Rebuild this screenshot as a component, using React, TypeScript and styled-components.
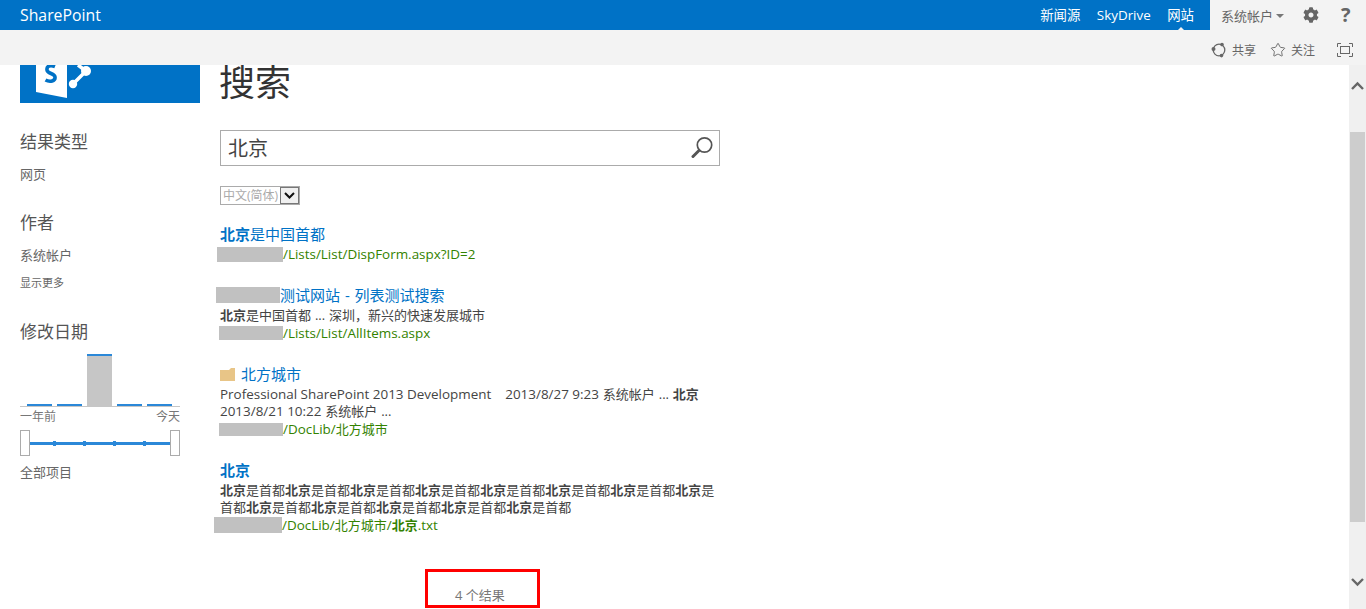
import React from "react";
import styled, { createGlobalStyle } from "styled-components";
import { FaCog } from "react-icons/fa";
import { Star } from "lucide-react";

const FONT = `"Open Sans", "Noto Sans CJK SC", sans-serif`;

const Global = createGlobalStyle`
  html, body { margin: 0; padding: 0; height: 100%; overflow: hidden; background: #fff; }
  body { font-family: ${FONT}; color: #444; }
  * { box-sizing: border-box; }
`;

const Page = styled.div`
  display: flex;
  flex-direction: column;
  height: 609px;
  width: 1366px;
  overflow: hidden;
`;

const TopBar = styled.header`
  display: flex;
  align-items: stretch;
  height: 30px;
  flex: none;
  background: #0072c6;
  color: #fff;
`;

const Brand = styled.div`
  flex: 1;
  padding-left: 20px;
  font-size: 15.8px;
  line-height: 30px;
`;

const NavList = styled.nav`
  display: flex;
  gap: 16.5px;
  padding-right: 16px;
  font-size: 13.4px;
  line-height: 30px;
`;

const NavItem = styled.span<{ $active?: boolean }>`
  position: relative;
  ${(p) =>
    p.$active &&
    `&::after {
      content: "";
      position: absolute;
      left: 50%;
      bottom: 0;
      margin-left: -3px;
      border: 3px solid transparent;
      border-top: 0;
      border-bottom-color: #f3f3f3;
    }`}
`;

const UserArea = styled.div`
  display: flex;
  align-items: center;
  width: 156px;
  padding-left: 11px;
  background: #f3f3f3;
  color: #666;
  font-size: 13px;
`;

const Caret = styled.span`
  width: 0;
  height: 0;
  margin-left: 3px;
  margin-top: 1px;
  border: 4px solid transparent;
  border-bottom: 0;
  border-top-color: #777;
`;

const GearWrap = styled.span`
  display: flex;
  margin-left: 19px;
  color: #666;
`;

const Help = styled.span`
  margin-left: 22px;
  font-size: 20px;
  font-weight: 700;
  line-height: 30px;
  color: #666;
`;

const Ribbon = styled.div`
  display: flex;
  align-items: center;
  justify-content: flex-end;
  height: 35px;
  flex: none;
  padding-top: 4px;
  padding-right: 13px;
  background: #f3f3f3;
  color: #666;
  font-size: 12px;
`;

const RibbonAction = styled.span`
  display: flex;
  align-items: center;
  gap: 5px;
  margin-right: 14px;
`;

const FocusIcon = styled.svg`
  margin-left: 8px;
  display: block;
`;

const Body = styled.div`
  flex: 1;
  min-height: 0;
  display: flex;
  overflow: hidden;
`;

const Content = styled.main`
  flex: 1;
  display: flex;
  min-width: 0;
  overflow: hidden;
`;

const Side = styled.aside`
  width: 220px;
  flex: none;
  padding-left: 20px;
`;

const Logo = styled.div`
  width: 180px;
  height: 38px;
  background: #0072c6;
`;

const RefinerTitle = styled.h3<{ $top: number }>`
  margin: ${(p) => p.$top}px 0 0;
  font-size: 17px;
  font-weight: 400;
  line-height: 24px;
  color: #555;
`;

const RefinerItem = styled.div`
  margin-top: 11px;
  font-size: 13px;
  line-height: 18px;
  color: #666;
`;

const MoreLink = styled.div`
  margin-top: 11px;
  font-size: 11px;
  line-height: 16px;
  color: #666;
`;

const Chart = styled.div`
  display: flex;
  align-items: flex-end;
  gap: 5px;
  width: 160px;
  height: 53px;
  margin-top: 10px;
  padding: 0 8px 0 7px;
  border-bottom: 1px solid #c6c6c6;
`;

const Bar = styled.div<{ $h: number }>`
  width: 25px;
  height: ${(p) => p.$h}px;
  background: #c6c6c6;
  border-top: 2px solid #2b88d8;
`;

const AxisLabels = styled.div`
  display: flex;
  justify-content: space-between;
  width: 160px;
  margin-top: 2px;
  font-size: 12px;
  line-height: 16px;
  color: #777;
`;

const Slider = styled.div`
  display: flex;
  align-items: center;
  width: 160px;
  height: 26px;
  margin-top: 5px;
`;

const Handle = styled.div`
  width: 10px;
  height: 26px;
  flex: none;
  background: #fff;
  border: 1px solid #ababab;
`;

const Track = styled.div`
  flex: 1;
  display: flex;
  align-items: center;
  gap: 27px;
  height: 3px;
  padding-left: 23px;
  background: #2b88d8;
`;

const Tick = styled.span`
  width: 3px;
  height: 5px;
  flex: none;
  background: #2b88d8;
`;

const AllItems = styled.div`
  margin-top: 7px;
  font-size: 13px;
  line-height: 18px;
  color: #666;
`;

const Main = styled.section`
  width: 520px;
  flex: none;
`;

const PageTitle = styled.h1`
  margin: -6px 0 0 -1px;
  font-size: 36px;
  font-weight: 400;
  line-height: 48px;
  color: #333;
`;

const SearchBox = styled.div`
  display: flex;
  align-items: center;
  justify-content: space-between;
  width: 500px;
  height: 36px;
  margin-top: 23px;
  padding: 0 5px 2px 7px;
  border: 1px solid #ababab;
  font-size: 20px;
  color: #444;
`;

const Language = styled.div`
  display: flex;
  width: 80px;
  height: 19px;
  margin-top: 20px;
  border: 1px solid #ababab;
  font-size: 12px;
  line-height: 17px;
  color: #aaa;
`;

const LanguageText = styled.span`
  width: 60px;
  padding-left: 2px;
  white-space: nowrap;
`;

const LanguageArrow = styled.span`
  display: flex;
  align-items: center;
  justify-content: center;
  width: 19px;
  background: #f0f0f0;
  border: 1px solid #777;
`;

const Results = styled.div`
  display: flex;
  flex-direction: column;
  gap: 22px;
  margin-top: 19px;
  width: 500px;
`;

const Result = styled.article``;

const ResultTitle = styled.div`
  display: flex;
  align-items: center;
  font-size: 15px;
  line-height: 20px;
  color: #0072c6;
  white-space: pre;
  word-spacing: 1px;
`;

const Desc = styled.div`
  margin-top: 2px;
  font-size: 13px;
  line-height: 17px;
  color: #444;
  word-spacing: 0.5px;
`;

const Url = styled.div`
  display: flex;
  align-items: center;
  margin-top: 1px;
  font-size: 13px;
  line-height: 18px;
  color: #338200;
  white-space: nowrap;

  ${Desc} + & {
    margin-top: 0;
  }
`;

const Latin = styled.span`
  font-size: 13.45px;
  word-spacing: 0;
`;

const Redacted = styled.span<{ $left: number; $width: number; $height: number }>`
  display: inline-block;
  flex: none;
  margin-left: ${(p) => p.$left}px;
  width: ${(p) => p.$width}px;
  height: ${(p) => p.$height}px;
  background: #c1c1c1;
`;

const FolderIcon = styled.svg`
  display: block;
  margin-right: 6px;
`;

const CountBox = styled.div`
  width: 115px;
  height: 39px;
  margin: 35px 0 0 205px;
  padding: 14px 0 0 27px;
  border: 3px solid #f00;
  font-size: 13px;
  line-height: 18px;
  color: #777;
  white-space: nowrap;
`;

const Scrollbar = styled.div`
  display: flex;
  flex-direction: column;
  align-items: center;
  width: 17px;
  flex: none;
  background: #f0f0f0;
`;

const ScrollButton = styled.svg`
  display: block;
  flex: none;
`;

const Thumb = styled.div<{ $h: number; $top: number }>`
  width: 15px;
  height: ${(p) => p.$h}px;
  margin-top: ${(p) => p.$top}px;
  background: #cdcdcd;
  flex: none;
`;

const LogoArt = () => (
  <svg width="180" height="38" viewBox="0 0 180 38" style={{ display: "block" }}>
    <path d="M16 0H47V33L16 27Z" fill="#fff" />
    <path d="M35 1.5C30 -0.5 26.5 1 27 5C27.5 9 34.5 8 35 12C35.5 16 30 17.5 25.5 15" fill="none" stroke="#0072c6" strokeWidth="3.6" />
    <path d="M53 19L66 6M58 0L66 6" stroke="#fff" strokeWidth="3.5" fill="none" />
    <circle cx="53" cy="19" r="4.2" fill="#fff" />
    <circle cx="66" cy="6" r="5" fill="#fff" />
  </svg>
);

const ShareIcon = () => (
  <svg width="16" height="16" viewBox="0 0 16 16">
    <circle cx="8" cy="8" r="5.8" fill="none" stroke="#666" strokeWidth="1.3" />
    <circle cx="2.5" cy="7" r="2" fill="#666" />
    <circle cx="11" cy="2.6" r="1.8" fill="#666" />
    <circle cx="10.5" cy="13.6" r="1.8" fill="#666" />
  </svg>
);

const MagnifierIcon = () => (
  <svg width="23" height="23" viewBox="0 0 23 23">
    <circle cx="13.5" cy="9" r="7.2" fill="none" stroke="#555" strokeWidth="1.7" />
    <path d="M8 14.5L2 20.5" stroke="#555" strokeWidth="3" strokeLinecap="round" />
  </svg>
);

export default function App() {
  return (
    <Page>
      <Global />
      <TopBar>
        <Brand>SharePoint</Brand>
        <NavList>
          <NavItem>新闻源</NavItem>
          <NavItem>SkyDrive</NavItem>
          <NavItem $active>网站</NavItem>
        </NavList>
        <UserArea>
          系统帐户
          <Caret />
          <GearWrap>
            <FaCog size={16} />
          </GearWrap>
          <Help>?</Help>
        </UserArea>
      </TopBar>
      <Ribbon>
        <RibbonAction>
          <ShareIcon />
          共享
        </RibbonAction>
        <RibbonAction>
          <Star size={16} strokeWidth={1.4} color="#666" />
          关注
        </RibbonAction>
        <FocusIcon width="16" height="14" viewBox="0 0 16 14">
          <path d="M.5 4V.5H4M12 .5H15.5V4M15.5 10V13.5H12M4 13.5H.5V10" fill="none" stroke="#666" />
          <rect x="3.5" y="3.5" width="9" height="7" fill="none" stroke="#666" />
        </FocusIcon>
      </Ribbon>
      <Body>
        <Content>
          <Side>
            <Logo>
              <LogoArt />
            </Logo>
            <RefinerTitle $top={27}>结果类型</RefinerTitle>
            <RefinerItem>网页</RefinerItem>
            <RefinerTitle $top={28}>作者</RefinerTitle>
            <RefinerItem>系统帐户</RefinerItem>
            <MoreLink>显示更多</MoreLink>
            <RefinerTitle $top={29}>修改日期</RefinerTitle>
            <Chart>
              <Bar $h={2} />
              <Bar $h={2} />
              <Bar $h={52} />
              <Bar $h={2} />
              <Bar $h={2} />
            </Chart>
            <AxisLabels>
              <span>一年前</span>
              <span>今天</span>
            </AxisLabels>
            <Slider>
              <Handle />
              <Track>
                <Tick />
                <Tick />
                <Tick />
                <Tick />
              </Track>
              <Handle />
            </Slider>
            <AllItems>全部项目</AllItems>
          </Side>
          <Main>
            <PageTitle>搜索</PageTitle>
            <SearchBox>
              北京
              <MagnifierIcon />
            </SearchBox>
            <Language>
              <LanguageText>中文(简体)</LanguageText>
              <LanguageArrow>
                <svg width="11" height="7" viewBox="0 0 11 7">
                  <path d="M1 1L5.5 5.5L10 1" fill="none" stroke="#111" strokeWidth="2" />
                </svg>
              </LanguageArrow>
            </Language>
            <Results>
              <Result>
                <ResultTitle>
                  <span>
                    <b>北京</b>是中国首都
                  </span>
                </ResultTitle>
                <Url>
                  <Redacted $left={-3} $width={66} $height={15} />
                  <Latin>/Lists/List/DispForm.aspx?ID=2</Latin>
                </Url>
              </Result>
              <Result>
                <ResultTitle>
                  <Redacted $left={-4} $width={64} $height={16} />
                  测试网站 - 列表测试搜索
                </ResultTitle>
                <Desc>
                  <b>北京</b>是中国首都 ... 深圳，新兴的快速发展城市
                </Desc>
                <Url>
                  <Redacted $left={-1} $width={64} $height={14} />
                  <Latin>/Lists/List/AllItems.aspx</Latin>
                </Url>
              </Result>
              <Result>
                <ResultTitle>
                  <FolderIcon width="15" height="13" viewBox="0 0 15 13">
                    <path d="M0 2H9L11 0H15V13H0Z" fill="#e8c587" />
                  </FolderIcon>
                  北方城市
                </ResultTitle>
                <Desc>
                  <Latin>Professional SharePoint 2013 Development &nbsp;&nbsp; 2013/8/27 9:23</Latin> 系统帐户 ... <b>北京</b>
                  <br />
                  <Latin>2013/8/21 10:22</Latin> 系统帐户 ...
                </Desc>
                <Url>
                  <Redacted $left={-1} $width={64} $height={13} />
                  <Latin>/DocLib/</Latin>北方城市
                </Url>
              </Result>
              <Result>
                <ResultTitle>
                  <b>北京</b>
                </ResultTitle>
                <Desc>
                  <b>北京</b>是首都<b>北京</b>是首都<b>北京</b>是首都<b>北京</b>是首都<b>北京</b>是首都<b>北京</b>是首都<b>北京</b>是首都<b>北京</b>是首都<b>北京</b>是首都<b>北京</b>是首都<b>北京</b>是首都<b>北京</b>是首都<b>北京</b>是首都
                </Desc>
                <Url>
                  <Redacted $left={-6} $width={68} $height={16} />
                  <span>
                    <Latin>/DocLib/</Latin>北方城市<Latin>/</Latin><b>北京</b><Latin>.txt</Latin>
                  </span>
                </Url>
              </Result>
            </Results>
            <CountBox>4 个结果</CountBox>
          </Main>
        </Content>
        <Scrollbar>
          <ScrollButton width="13" height="10" viewBox="0 0 13 10" style={{ marginTop: 16 }}>
            <path d="M1 8L6.5 2.5L12 8" fill="none" stroke="#666" strokeWidth="2.4" />
          </ScrollButton>
          <Thumb $h={390} $top={41} />
          <ScrollButton width="13" height="10" viewBox="0 0 13 10" style={{ marginTop: 55 }}>
            <path d="M1 2L6.5 7.5L12 2" fill="none" stroke="#666" strokeWidth="2.4" />
          </ScrollButton>
        </Scrollbar>
      </Body>
    </Page>
  );
}
